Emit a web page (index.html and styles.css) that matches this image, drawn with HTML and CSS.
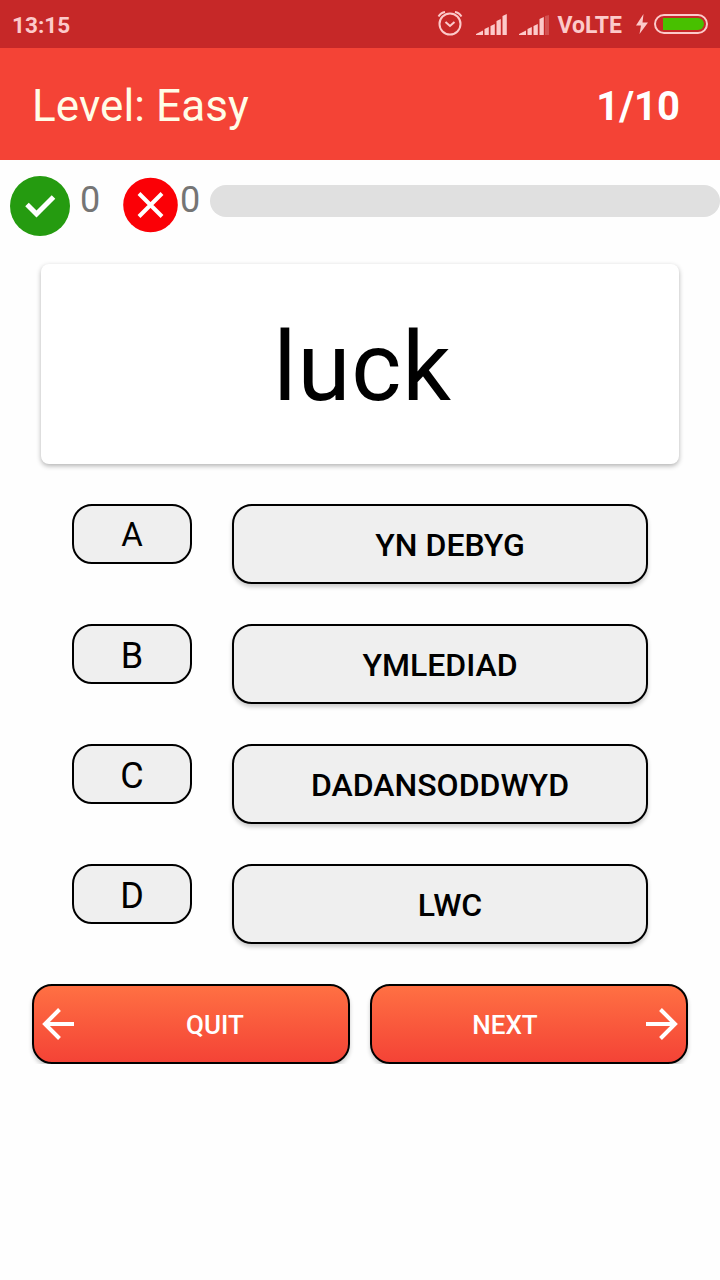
FILE: index.html
```html
<!DOCTYPE html>
<html lang="en">
<head>
    <meta charset="UTF-8">
    <meta name="viewport" content="width=device-width, initial-scale=1.0">
    <link rel="stylesheet" href="styles.css">
    <title>Level: Easy</title>
</head>
<body>
    <div class="status-bar">
        <span class="clock">13:15</span>
        <svg class="alarm" width="26" height="26" viewBox="0 0 26 26">
            <circle cx="13" cy="14" r="10.5"/>
            <path d="M8.500 12l4.500 4 4.500-4M1.500 6.500Q4 2.500 8 2M24.500 6.500Q22 2.500 18 2"/>
        </svg>
        <svg class="signal" width="31" height="21" viewBox="0 0 31 21">
            <path d="M0 21v-1l7-3.500v4.500zM8.500 21v-6l4.300-2v8zM14.500 21v-9l4.300-2v11zM20.500 21V7l4.300-2v16zM26.500 21V2l4.300-2v21z"/>
        </svg>
        <svg class="signal signal-two" width="31" height="21" viewBox="0 0 31 21">
            <path d="M0 21v-1l7-3.500v4.500zM8.500 21v-6l4.300-2v8zM14.500 21v-9l4.300-2v11zM20.500 21V5l4.300-2v18z"/>
            <path class="faint" d="M26 21V2l4-1v20z"/>
        </svg>
        <span class="network">VoLTE</span>
        <svg class="bolt" width="12" height="20" viewBox="0 0 12 20">
            <path d="M7.500 0L0 11.500h5L3.500 20 12 8.500H6.500z"/>
        </svg>
        <div class="battery"><div class="battery-level"></div></div>
    </div>

    <div class="header">
        <h1>Level: Easy</h1>
        <span class="counter">1/10</span>
    </div>

    <div class="score">
        <svg width="60" height="60" viewBox="0 0 60 60">
            <circle cx="30" cy="30" r="30" fill="#259b10"/>
            <path d="M17 28.500l9.500 9.500L43.500 21" fill="none" stroke="#fff" stroke-width="5"/>
        </svg>
        <span class="right-count">0</span>
        <svg class="wrong-icon" width="55" height="56" viewBox="0 0 55 56">
            <circle cx="27.500" cy="28" r="27.300" fill="#fb0006"/>
            <path d="M16 16.500l23 23M39 16.500l-23 23" stroke="#fff" stroke-width="4"/>
        </svg>
        <span class="wrong-count">0</span>
        <div class="progress"></div>
    </div>

    <div class="word">luck</div>

    <div class="answers">
        <div class="answer">
            <div class="letter letter-a">A</div>
            <button class="indent">YN DEBYG</button>
        </div>
        <div class="answer">
            <div class="letter">B</div>
            <button>YMLEDIAD</button>
        </div>
        <div class="answer">
            <div class="letter">C</div>
            <button>DADANSODDWYD</button>
        </div>
        <div class="answer">
            <div class="letter">D</div>
            <button class="indent">LWC</button>
        </div>
    </div>

    <div class="actions">
        <button>
            <svg width="32" height="32" viewBox="0 0 32 32"><path d="M32 16H3M17.500 1.500L3 16l14.500 14.500"/></svg>
            <span>QUIT</span>
        </button>
        <button>
            <span>NEXT</span>
            <svg width="32" height="32" viewBox="0 0 32 32"><path d="M0 16h29M14.500 1.500L29 16 14.500 30.500"/></svg>
        </button>
    </div>
</body>
</html>
```
FILE: styles.css
```css
* {
    box-sizing: border-box;
}

body {
    margin: 0;
    background-color: #fefefe;
    font-family: Roboto, sans-serif;
    color: #000;
}

button {
    font-family: inherit;
    padding: 0;
    cursor: pointer;
}

/* Phone status bar */
.status-bar {
    display: flex;
    align-items: center;
    height: 48px;
    padding: 0 12px;
    background-color: #c62828;
    color: #fccaca;
    font-size: 23px;
    font-weight: bold;
}

.clock {
    margin-right: auto;
    padding-top: 2px;
    font-size: 22.6px;
}

.alarm {
    margin-right: 13px;
    margin-bottom: 2px;
    fill: none;
    stroke: #fccaca;
    stroke-width: 2;
}

.signal {
    margin-right: 12px;
    fill: #fccaca;
}

.signal-two {
    margin-right: 7px;
}

.faint {
    opacity: 0.25;
}

.network {
    padding-top: 2px;
}

.bolt {
    margin-left: 14px;
    margin-right: 6px;
    fill: #fccaca;
}

.battery {
    width: 54px;
    height: 20px;
    padding: 2px 2px 2px 7px;
    border: 2px solid #fccaca;
    border-radius: 10px;
}

.battery-level {
    height: 12px;
    background-color: #48c000;
    border-radius: 0 6px 6px 0;
}

/* Header */
.header {
    display: flex;
    align-items: center;
    justify-content: space-between;
    height: 112px;
    padding: 4px 40px 0 32px;
    background-color: #f44336;
    color: #fffde7;
}

.header h1 {
    margin: 0;
    font-size: 44px;
    font-weight: normal;
    letter-spacing: 0.1px;
}

.counter {
    color: #fff;
    font-size: 40px;
    font-weight: bold;
}

/* Score row */
.score {
    display: flex;
    align-items: flex-start;
    height: 104px;
    padding: 16px 0 0 10px;
    font-size: 36px;
    line-height: 48px;
    color: #757575;
}

.right-count {
    width: 20px;
    margin: 0 22.5px 0 10px;
}

.wrong-icon {
    margin-top: 1px;
}

.wrong-count {
    width: 20px;
    margin: 0 10px 0 2.5px;
}

.progress {
    flex: 1;
    height: 32px;
    margin-top: 9px;
    background-color: #e0e0e0;
    border-radius: 16px;
}

/* Question card */
.word {
    height: 200px;
    margin: 0 41px;
    padding-left: 5px;
    background-color: #fff;
    border-radius: 8px;
    box-shadow: 0 2px 5px rgba(0, 0, 0, 0.3);
    font-size: 96px;
    line-height: 206px;
    letter-spacing: 0.8px;
    text-align: center;
}

/* Answers */
.answers {
    display: grid;
    gap: 40px;
    padding: 40px 72px;
}

.answer {
    display: flex;
    align-items: flex-start;
    gap: 40px;
}

.letter {
    width: 120px;
    height: 60px;
    background-color: #efefef;
    border: 2px solid #000;
    border-radius: 20px;
    font-size: 36px;
    line-height: 60px;
    text-align: center;
}

.letter-a {
    font-size: 33px;
    line-height: 57px;
}

.answer button {
    flex: 1;
    height: 80px;
    padding-top: 2px;
    background-color: #efefef;
    border: 2px solid #000;
    border-radius: 20px;
    box-shadow: 0 3px 4px rgba(0, 0, 0, 0.2);
    color: #000;
    font-size: 32px;
    font-weight: 500;
}

.answer .indent {
    padding-left: 20px;
}

/* Quit and next */
.actions {
    display: flex;
    gap: 20px;
    padding: 0 32px;
}

.actions button {
    display: flex;
    align-items: center;
    gap: 16px;
    flex: 1;
    height: 80px;
    padding: 0 8px;
    background: linear-gradient(#ff7043, #f44336);
    border: 2px solid #000;
    border-radius: 20px;
    box-shadow: 0 3px 4px rgba(0, 0, 0, 0.2);
    color: #fff;
    font-size: 26px;
    font-weight: 500;
}

.actions span {
    flex: 1;
    padding-top: 2px;
}

.actions path {
    fill: none;
    stroke: #fff;
    stroke-width: 4;
}
```
